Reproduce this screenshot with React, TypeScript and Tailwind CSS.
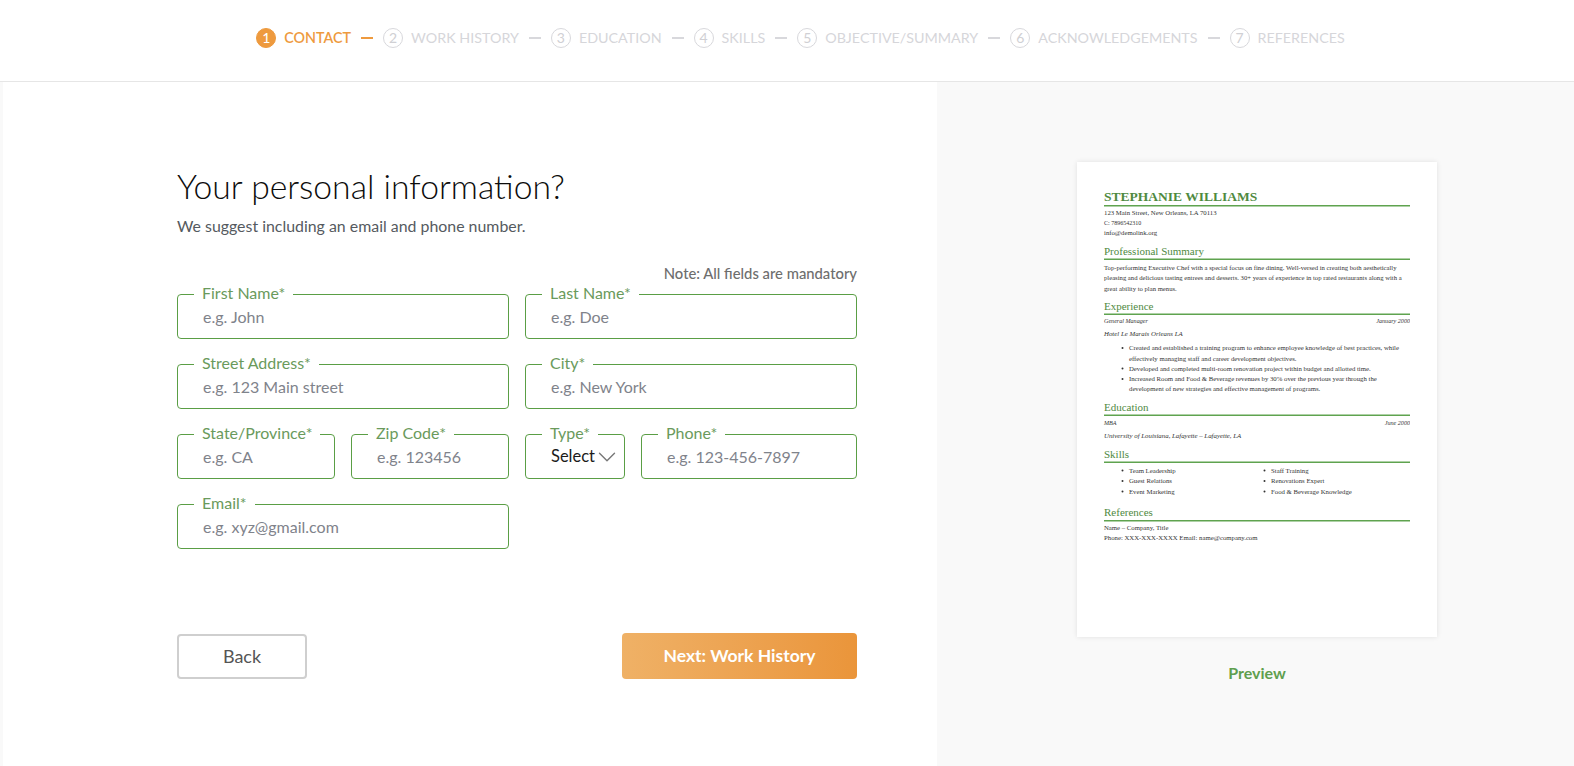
import { ChevronDown } from 'lucide-react'

const steps = ['CONTACT', 'WORK HISTORY', 'EDUCATION', 'SKILLS', 'OBJECTIVE/SUMMARY', 'ACKNOWLEDGEMENTS', 'REFERENCES']

function Field({ label, placeholder, className }: { label: string; placeholder: string; className: string }) {
  return (
    <div className={`relative h-[45px] rounded-[4px] border border-[#5a9e45] ${className}`}>
      <span className="absolute left-[16px] top-[-12px] bg-white px-[8px] text-[16px] leading-[20px] text-[#6a9a5c]">{label}</span>
      <span className="absolute left-[25px] top-[12px] text-[16px] leading-[20px] text-[#7f838b]">{placeholder}</span>
    </div>
  )
}

function Heading({ children, className }: { children: string; className: string }) {
  return <div className={`border-b-[3px] border-[#5fa34f] text-[22px] leading-[30px] text-[#4f8a3f] ${className}`}>{children}</div>
}

export default function App() {
  return (
    <div className="flex h-[766px] flex-col overflow-hidden bg-[#f9f9f9] font-['Lato',sans-serif]">
      {/* Steps */}
      <div className="flex h-[82px] shrink-0 justify-center border-b border-[#e6e6e6] bg-white pl-[27px] pt-[27px]">
        <div className="flex h-[21px] items-center text-[14.3px]">
          {steps.map((step, i) => (
            <div key={step} className="flex items-center">
              {i > 0 && <div className={`mx-[10px] h-[2px] w-[12px] ${i === 1 ? 'bg-[#ee9a3e]' : 'bg-[#d8d8dc]'}`} />}
              <div className={`mr-[8px] flex h-[20px] w-[20px] items-center justify-center rounded-full border text-[14px] ${i === 0 ? 'border-[#ee9a3e] bg-[#ee9a3e] text-white' : 'border-[#d8d8dc] text-[#d0d0d4]'}`}>{i + 1}</div>
              <span className={i === 0 ? 'font-semibold text-[#ee9a3e]' : 'text-[#d6d6da]'}>{step}</span>
            </div>
          ))}
        </div>
      </div>

      <div className="flex flex-1">
        {/* Form */}
        <div className="ml-[3px] w-[934px] bg-white pl-[174px] pt-[84px]">
          <div className="w-[680px]">
            <h1 className="text-[33.7px] font-light leading-[40px] text-[#0c0c0c]">Your personal information?</h1>
            <p className="mt-[10px] text-[15.9px] leading-[20px] text-[#555a60]">We suggest including an email and phone number.</p>
            <p className="mt-[28px] text-right text-[14.8px] font-medium leading-[18px] text-[#6e6e6e]">Note: All fields are mandatory</p>
            <div className="mt-[12px] flex flex-col gap-[25px]">
              <div className="flex gap-[16px]">
                <Field className="w-[332px]" label="First Name*" placeholder="e.g. John" />
                <Field className="w-[332px]" label="Last Name*" placeholder="e.g. Doe" />
              </div>
              <div className="flex gap-[16px]">
                <Field className="w-[332px]" label="Street Address*" placeholder="e.g. 123 Main street" />
                <Field className="w-[332px]" label="City*" placeholder="e.g. New York" />
              </div>
              <div className="flex gap-[16px]">
                <Field className="w-[158px]" label="State/Province*" placeholder="e.g. CA" />
                <Field className="w-[158px]" label="Zip Code*" placeholder="e.g. 123456" />
                <div className="relative h-[45px] w-[100px] rounded-[4px] border border-[#5a9e45]">
                  <span className="absolute left-[16px] top-[-12px] bg-white px-[8px] text-[16px] leading-[20px] text-[#6a9a5c]">Type*</span>
                  <span className="absolute left-[25px] top-[11px] text-[16.5px] leading-[20px] text-[#1b1b1b]">Select</span>
                  <ChevronDown className="absolute right-[2px] top-[7px] h-[30px] w-[30px] text-[#777777]" strokeWidth={1.1} />
                </div>
                <Field className="w-[216px]" label="Phone*" placeholder="e.g. 123-456-7897" />
              </div>
              <div className="flex">
                <Field className="w-[332px]" label="Email*" placeholder="e.g. xyz@gmail.com" />
              </div>
            </div>
            <div className="mt-[84px] flex items-end justify-between">
              <button className="h-[45px] w-[130px] rounded-[4px] border-2 border-[#cfcfcf] text-[18px] text-[#555555]">Back</button>
              <button className="h-[46px] w-[235px] rounded-[4px] bg-gradient-to-r from-[#efb166] to-[#ea953a] text-[17.5px] font-bold text-white">Next: Work History</button>
            </div>
          </div>
        </div>

        {/* Preview */}
        <div className="flex flex-1 flex-col items-center pl-[3px] pt-[80px]">
          <div className="h-[475px] w-[360px] overflow-hidden bg-white shadow-[0_0_5px_rgba(0,0,0,0.1)]">
            <div className="w-[720px] origin-top-left scale-50 px-[54px] pt-[50px] font-['Liberation_Serif',serif] text-[13.5px] leading-[20px] text-[#333333]">
              <div className="border-b-[3px] border-[#5fa34f] text-[27px] font-bold leading-[36px] text-[#4f8a3f]">STEPHANIE WILLIAMS</div>
              <p className="mt-[3px]">123 Main Street, New Orleans, LA 70113</p>
              <p className="text-[12px]">C: 7896542310</p>
              <p>info@demolink.org</p>
              <Heading className="mt-[11px]">Professional Summary</Heading>
              <p className="mt-[6px] text-[13.33px] leading-[20.4px]">Top-performing Executive Chef with a special focus on fine dining. Well-versed in creating both aesthetically pleasing and delicious tasting entrees and desserts. 30+ years of experience in top rated restaurants along with a great ability to plan menus.</p>
              <Heading className="mt-[10px]">Experience</Heading>
              <div className="mt-[2px] flex justify-between text-[12.2px] italic"><span>General Manager</span><span>January 2000</span></div>
              <p className="mt-[6px] text-[13.7px] italic">Hotel Le Marais Orleans LA</p>
              <ul className="mt-[8px] list-disc pl-[50px] leading-[20.5px]">
                <li>Created and established a training program to enhance employee knowledge of best practices, while effectively managing staff and career development objectives.</li>
                <li>Developed and completed multi-room renovation project within budget and allotted time.</li>
                <li>Increased Room and Food &amp; Beverage revenues by 30% over the previous year through the development of new strategies and effective management of programs.</li>
              </ul>
              <Heading className="mt-[10px]">Education</Heading>
              <div className="mt-[4px] flex justify-between text-[12.2px] italic"><span>MBA</span><span>June 2000</span></div>
              <p className="mt-[6px] text-[13.7px] italic">University of Louisiana, Lafayette – Lafayette, LA</p>
              <Heading className="mt-[11px]">Skills</Heading>
              <ul className="mt-[4px] grid list-disc grid-cols-[284px_1fr] pl-[50px] leading-[21px]">
                <li>Team Leadership</li>
                <li>Staff Training</li>
                <li>Guest Relations</li>
                <li>Renovations Expert</li>
                <li>Event Marketing</li>
                <li>Food &amp; Beverage Knowledge</li>
              </ul>
              <Heading className="mt-[17px]">References</Heading>
              <p className="mt-[2px]">Name – Company, Title</p>
              <p>Phone: XXX-XXX-XXXX Email: name@company.com</p>
            </div>
          </div>
          <p className="mt-[24px] text-[16px] font-bold text-[#5f9f4f]">Preview</p>
        </div>
      </div>
    </div>
  )
}
